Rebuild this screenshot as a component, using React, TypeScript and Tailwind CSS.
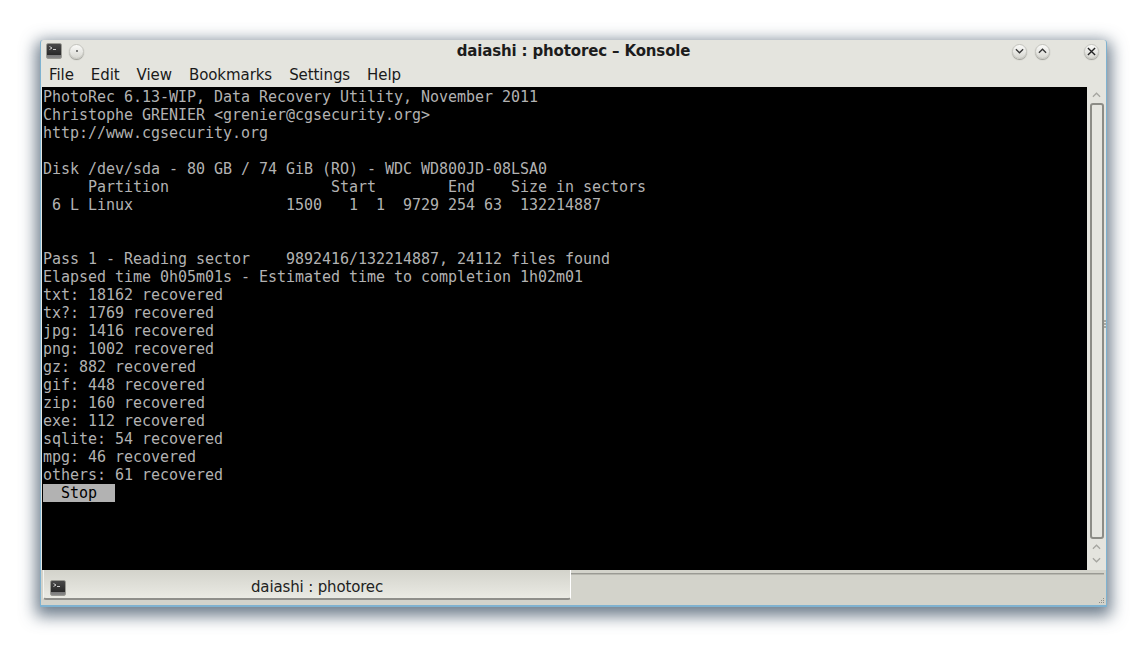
const terminalLines = [
  "PhotoRec 6.13-WIP, Data Recovery Utility, November 2011",
  "Christophe GRENIER <grenier@cgsecurity.org>",
  "http://www.cgsecurity.org",
  "",
  "Disk /dev/sda - 80 GB / 74 GiB (RO) - WDC WD800JD-08LSA0",
  "     Partition                  Start        End    Size in sectors",
  " 6 L Linux                 1500   1  1  9729 254 63  132214887",
  "",
  "",
  "Pass 1 - Reading sector    9892416/132214887, 24112 files found",
  "Elapsed time 0h05m01s - Estimated time to completion 1h02m01",
  "txt: 18162 recovered",
  "tx?: 1769 recovered",
  "jpg: 1416 recovered",
  "png: 1002 recovered",
  "gz: 882 recovered",
  "gif: 448 recovered",
  "zip: 160 recovered",
  "exe: 112 recovered",
  "sqlite: 54 recovered",
  "mpg: 46 recovered",
  "others: 61 recovered",
];

const menus = ["File", "Edit", "View", "Bookmarks", "Settings", "Help"];

const KonsoleIcon = () => (
  <div className="w-[16px] h-[16px] shrink-0 rounded-[2px] border border-[#9a9a94] bg-[linear-gradient(#4a4a4a,#2a2a2a_75%,#777_76%,#888)] pl-[2px] pt-[2px]">
    <svg viewBox="0 0 10 6" className="w-[10px] h-[6px] block">
      <path d="M0.5 0.5 L3 2 L0.5 3.5" stroke="#ddd" strokeWidth="0.9" fill="none" />
      <path d="M4 3.5 H7" stroke="#ddd" strokeWidth="0.9" fill="none" />
    </svg>
  </div>
);

const RoundButton = ({ children }: { children?: React.ReactNode }) => (
  <div className="w-[15px] h-[15px] rounded-full border border-[#c4c4be] bg-[linear-gradient(#fafaf8,#d8d8d2)] shadow-[0_1px_1px_#9a9a94] flex items-center justify-center">
    {children}
  </div>
);

const Chevron = ({ up, color = "#333" }: { up?: boolean; color?: string }) => (
  <svg viewBox="0 0 10 6" className="w-[9px] h-[6px]">
    <path d={up ? "M1 5 L5 1 L9 5" : "M1 1 L5 5 L9 1"} stroke={color} strokeWidth="1.4" fill="none" />
  </svg>
);

export default function App() {
  return (
    <div className="w-[1146px] h-[646px] bg-white overflow-hidden pt-[40px] pl-[40px]">
      <div className="w-[1067px] h-[567px] flex flex-col rounded-t-[3px] bg-[#e4e4de] border-x-[1px] border-b-[2px] border-[#7fb2d0] border-t-[#dfe6e8] shadow-[0_5px_16px_4px_rgba(60,80,100,0.75)]">
        {/* titlebar */}
        <div className="h-[22px] shrink-0 flex items-center pl-[5px] pr-[7px] relative">
          <KonsoleIcon />
          <div className="ml-[7px]">
            <RoundButton>
              <div className="w-[2px] h-[2px] rounded-full bg-[#555]" />
            </RoundButton>
          </div>
          <div className="absolute inset-x-0 top-[1px] text-center text-[15px] leading-[20px] font-bold tracking-[-0.15px] text-[#1c1c1c] font-['DejaVu_Sans',sans-serif]">
            daiashi : photorec – Konsole
          </div>
          <div className="ml-auto flex items-center">
            <RoundButton>
              <Chevron />
            </RoundButton>
            <div className="ml-[8px]">
              <RoundButton>
                <Chevron up />
              </RoundButton>
            </div>
            <div className="ml-[34px]">
              <RoundButton>
                <svg viewBox="0 0 10 10" className="w-[9px] h-[9px]">
                  <path d="M1 1 L9 9 M9 1 L1 9" stroke="#222" strokeWidth="1.5" />
                </svg>
              </RoundButton>
            </div>
          </div>
        </div>
        {/* menu */}
        <div className="h-[25px] shrink-0 flex items-center gap-[17px] pl-[8px] pt-[1px] text-[15px] tracking-[-0.07px] text-[#1a1a1a] font-['DejaVu_Sans',sans-serif]">
          {menus.map((m) => (
            <span key={m}>{m}</span>
          ))}
        </div>
        {/* terminal + scrollbar */}
        <div className="h-[483px] shrink-0 flex pl-[1px]">
          <div className="w-[1045px] shrink-0 bg-black pl-[1px] pt-[1px] text-[15px] leading-[18px] tracking-[-0.03px] text-[#b2b2b2] font-['DejaVu_Sans_Mono',monospace] whitespace-pre">
            {terminalLines.map((line, i) => (
              <div key={i} className="h-[18px]">
                {line}
              </div>
            ))}
            <div className="h-[18px] w-[72px] bg-[#b2b2b2] text-black">{"  Stop"}</div>
          </div>
          <div className="flex-1 flex flex-col items-center relative">
            <div className="h-[16px] flex items-center justify-center">
              <Chevron up color="#a6a6a0" />
            </div>
            <div className="w-[14px] h-[436px] rounded-[3px] border-2 border-[#8c8c86] bg-[#e6e6e0]" />
            <div className="h-[14px] mt-[1px] flex items-center justify-center">
              <Chevron up color="#a6a6a0" />
            </div>
            <div className="h-[12px] flex items-center justify-center">
              <Chevron color="#a6a6a0" />
            </div>
            <div className="absolute right-0 top-[233px] flex flex-col gap-[1px]">
              <div className="w-[2px] h-[2px] bg-[#a8a8a2]" />
              <div className="w-[2px] h-[2px] bg-[#a8a8a2]" />
              <div className="w-[2px] h-[2px] bg-[#a8a8a2]" />
            </div>
          </div>
        </div>
        {/* tabs */}
        <div className="h-[35px] shrink-0 flex bg-[#d3d3cb] relative">
          <div className="w-[528px] h-[30px] ml-[2px] pt-[7px] rounded-b-[3px] border-x border-b-2 border-l-[#f4f4f0] border-r-white border-b-[#8e8e8a] bg-[linear-gradient(#d3d3cb,#eaeae4)] flex items-center pl-[6px] shrink-0">
            <KonsoleIcon />
            <span className="ml-[185px] text-[15px] tracking-[-0.15px] text-[#222] font-['DejaVu_Sans',sans-serif]">daiashi : photorec</span>
          </div>
          <div className="flex-1 mt-[3px] mr-[2px] h-[2px] border-t border-[#9a9a94] border-b-[#b8b8b0] border-b" />
          <svg viewBox="0 0 6 6" className="absolute right-[1px] bottom-[1px] w-[6px] h-[6px]">
            <path d="M4 0h1v1H4zM2 2h1v1H2zM4 2h1v1H4zM0 4h1v1H0zM2 4h1v1H2zM4 4h1v1H4z" fill="#8e8e88" />
          </svg>
        </div>
      </div>
    </div>
  );
}
